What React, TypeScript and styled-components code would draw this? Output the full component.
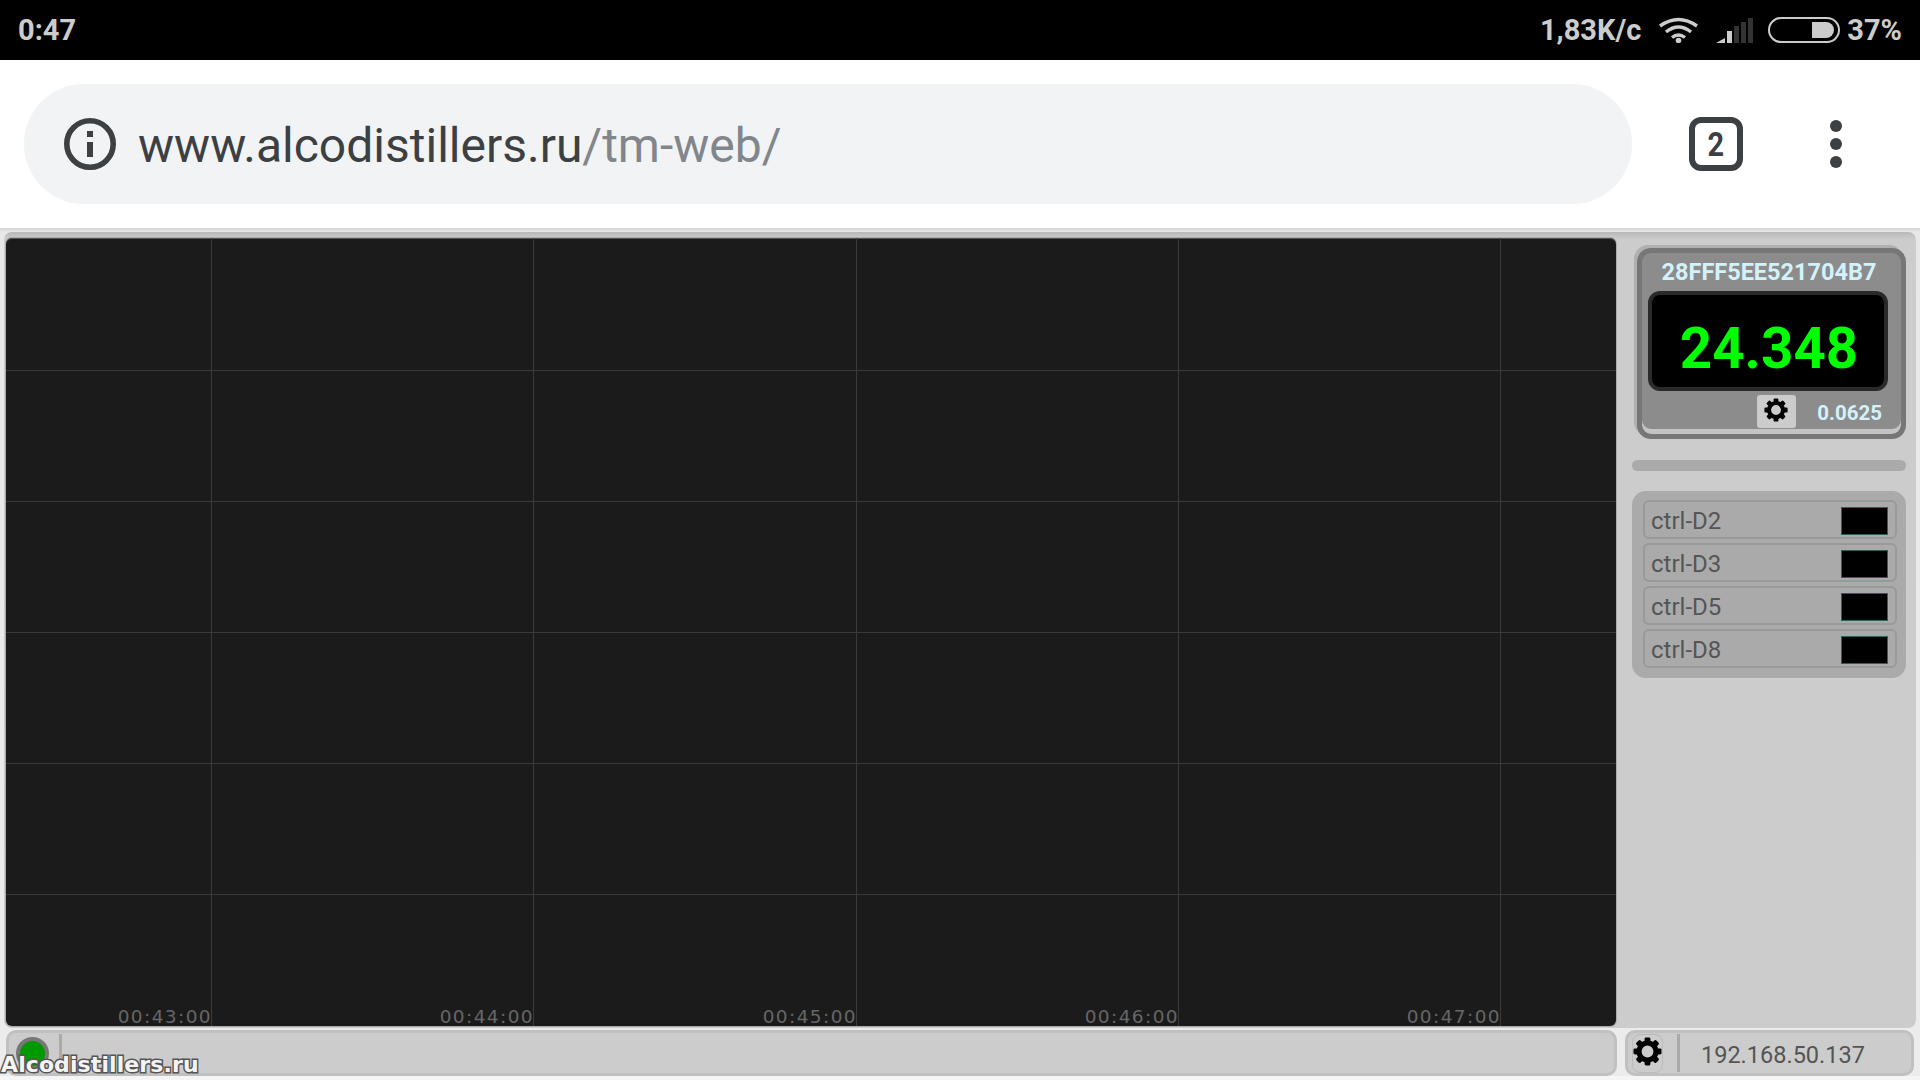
import React from "react";
import styled, { createGlobalStyle } from "styled-components";

const controls = ["ctrl-D2", "ctrl-D3", "ctrl-D5", "ctrl-D8"];
const gridX = [211, 533, 856, 1178, 1500];
const gridY = [132, 263, 394, 525, 656];
const times = ["00:43:00", "00:44:00", "00:45:00", "00:46:00", "00:47:00"];

export default function App() {
  return (
    <Page>
      <GlobalStyle />
      <StatusBar>
        <Clock>0:47</Clock>
        <StatusRight>
          <span>1,83K/c</span>
          <StatusSlot $left={18}>
            <WifiIcon />
          </StatusSlot>
          <StatusSlot $left={18}>
            <SignalIcon />
          </StatusSlot>
          <StatusSlot $left={14}>
            <BatteryIcon />
          </StatusSlot>
          <StatusSlot $left={7}>37%</StatusSlot>
        </StatusRight>
      </StatusBar>

      <Toolbar>
        <UrlPill>
          <InfoIcon />
          <UrlText>
            www.alcodistillers.ru<UrlPath>/tm-web/</UrlPath>
          </UrlText>
        </UrlPill>
        <TabCount>
          <span>2</span>
        </TabCount>
        <MenuDots>
          <i />
          <i />
          <i />
        </MenuDots>
      </Toolbar>

      <Workspace>
        <Upper>
          <ChartPane>
            <svg width="1610" height="788" viewBox="0 0 1610 788">
              {gridX.map((x) => (
                <line key={x} x1={x - 5.5} x2={x - 5.5} y1="0" y2="788" stroke="#3a3a3a" />
              ))}
              {gridY.map((y) => (
                <line key={y} x1="0" x2="1610" y1={y + 0.5} y2={y + 0.5} stroke="#3a3a3a" />
              ))}
              {times.map((t, i) => (
                <ChartLabel key={t} x={gridX[i] - 5} y="785" textAnchor="end">
                  {t}
                </ChartLabel>
              ))}
            </svg>
          </ChartPane>

          <Sidebar>
            <SensorCard>
              <SensorId>28FFF5EE521704B7</SensorId>
              <Display>24.348</Display>
              <SensorFoot>
                <CardGear>
                  <GearIcon size={24} />
                </CardGear>
                <Step>0.0625</Step>
              </SensorFoot>
            </SensorCard>
            <Divider />
            <ControlList>
              {controls.map((c) => (
                <ControlRow key={c}>
                  {c}
                  <Swatch />
                </ControlRow>
              ))}
            </ControlList>
          </Sidebar>
        </Upper>

        <Footer>
          <FooterLeft>
            <Led />
            <FootSep />
          </FooterLeft>
          <FooterRight>
            <FootGear>
              <GearIcon size={29} />
            </FootGear>
            <FootSep />
            <IpText>192.168.50.137</IpText>
          </FooterRight>
        </Footer>
        <Watermark>Alcodistillers.ru</Watermark>
      </Workspace>
    </Page>
  );
}

function GearIcon({ size }: { size: number }) {
  return (
    <svg width={size} height={size} viewBox="0 0 24 24">
      <circle cx="12" cy="12" r="7" fill="none" stroke="#000" strokeWidth="4.2" />
      {[0, 45, 90, 135, 180, 225, 270, 315].map((a) => (
        <rect key={a} x="9.6" y="0.4" width="4.8" height="5" rx="1.2" fill="#000" transform={`rotate(${a} 12 12)`} />
      ))}
    </svg>
  );
}

function WifiIcon() {
  return (
    <svg width="39" height="26" viewBox="0 0 39 26" fill="none" stroke="#ccc" strokeWidth="3.4">
      <path d="M1 9Q19.5 -4 38 9" />
      <path d="M7 15Q19.5 5 32 15" />
      <path d="M13 20.5Q19.5 15.5 26 20.5" />
      <circle cx="19.5" cy="23.5" r="2.8" fill="#ccc" stroke="none" />
    </svg>
  );
}

function SignalIcon() {
  return (
    <svg width="38" height="26" viewBox="0 0 38 26">
      <path d="M0 26 9 21V26Z" fill="#ccc" />
      <rect x="11" y="14" width="5" height="12" fill="#ccc" />
      <rect x="18" y="9" width="5" height="17" fill="#333" />
      <rect x="25" y="5" width="5" height="21" fill="#333" />
      <rect x="32" y="1" width="5" height="25" fill="#333" />
    </svg>
  );
}

function BatteryIcon() {
  return (
    <svg width="72" height="26" viewBox="0 0 72 26">
      <rect x="1" y="1" width="70" height="24" rx="12" fill="none" stroke="#ccc" strokeWidth="2" />
      <path d="M44 5H58A8 8 0 0 1 58 21H44Z" fill="#ccc" />
    </svg>
  );
}

function InfoIcon() {
  return (
    <svg width="52" height="52" viewBox="0 0 52 52">
      <circle cx="26" cy="26" r="23.2" fill="none" stroke="#3c4043" strokeWidth="5.6" />
      <rect x="23" y="13" width="6" height="6" fill="#3c4043" />
      <rect x="23" y="24" width="6" height="15" fill="#3c4043" />
    </svg>
  );
}

const GlobalStyle = createGlobalStyle`
  html, body {
    margin: 0;
    padding: 0;
    background: #f5f5f5;
  }
`;

const Page = styled.div`
  width: 1920px;
  height: 1080px;
  overflow: hidden;
  display: flex;
  flex-direction: column;
  font-family: Roboto, sans-serif;
`;

const StatusBar = styled.div`
  flex: none;
  height: 60px;
  background: #000;
  color: #ccc;
  display: flex;
  align-items: center;
  justify-content: space-between;
  padding: 0 18px;
  font-size: 29px;
  font-weight: 700;
`;

const Clock = styled.span``;

const StatusRight = styled.div`
  display: flex;
  align-items: center;
`;

const StatusSlot = styled.span<{ $left: number }>`
  margin-left: ${(p) => p.$left}px;
  display: flex;
  align-items: center;
`;

const Toolbar = styled.div`
  flex: none;
  height: 168px;
  background: #fff;
  display: flex;
  align-items: center;
  padding-left: 24px;
`;

const UrlPill = styled.div`
  width: 1608px;
  height: 120px;
  border-radius: 60px;
  background: #f1f3f4;
  display: flex;
  align-items: center;
  padding-left: 40px;
  box-sizing: border-box;
  gap: 22px;
`;

const UrlText = styled.span`
  font-size: 48px;
  color: #3c4043;
  padding-top: 2px;
`;

const UrlPath = styled.span`
  color: #80868b;
`;

const TabCount = styled.div`
  margin-left: 57px;
  width: 54px;
  height: 54px;
  box-sizing: border-box;
  border: 6px solid #3c4043;
  border-radius: 12px;
  display: flex;
  align-items: center;
  justify-content: center;
  color: #3c4043;
  font-size: 34px;
  font-weight: 700;
  span {
    transform: scaleX(0.85);
  }
`;

const MenuDots = styled.div`
  margin-left: 87px;
  display: flex;
  flex-direction: column;
  gap: 6px;
  i {
    width: 12px;
    height: 12px;
    border-radius: 50%;
    background: #3c4043;
  }
`;

const Workspace = styled.div`
  flex: none;
  position: relative;
  height: 848px;
  background: linear-gradient(#d4d4d4, #e8e8e8 4px, #ececec);
  display: flex;
  flex-direction: column;
`;

const Upper = styled.div`
  flex: none;
  height: 796px;
  margin: 4px 4px 0;
  display: flex;
  background: linear-gradient(#b8b8b8, #ccc 7px);
  border-radius: 8px;
`;

const ChartPane = styled.div`
  flex: none;
  margin: 6px 0 2px 2px;
  width: 1610px;
  height: 788px;
  background: #1b1b1b;
  border-radius: 6px;
  box-shadow: inset 0 1px 0 #555, 0 0 0 1px #aaa;
  svg {
    display: block;
    overflow: visible;
  }
`;

const ChartLabel = styled.text`
  font-family: "DejaVu Sans", sans-serif;
  font-size: 18.5px;
  letter-spacing: 1.4px;
  fill: #666;
`;

const Sidebar = styled.div`
  flex: 1;
  display: flex;
  flex-direction: column;
  padding: 16px 0 0 16px;
`;

const SensorCard = styled.div`
  margin-left: 5px;
  width: 269px;
  height: 191px;
  flex: none;
  box-sizing: border-box;
  border: 5px solid #777;
  border-radius: 14px;
  background: #8c8c8c;
  box-shadow: -3px -3px 0 #b0b0b0, inset 0 -5px 0 #c4c4c4;
  display: flex;
  flex-direction: column;
  padding: 4px 0 0 6px;
`;

const SensorId = styled.div`
  width: 240px;
  box-sizing: border-box;
  padding-left: 2px;
  text-align: center;
  color: #d4f2fb;
  font-size: 23.5px;
  font-weight: 700;
  line-height: 30px;
`;

const Display = styled.div`
  margin-top: 4px;
  width: 240px;
  height: 100px;
  flex: none;
  box-sizing: border-box;
  border: 4px solid #2a2a2a;
  border-radius: 12px;
  padding: 15px 0 0 2px;
  background: #000;
  color: #00ff00;
  font-size: 56.5px;
  font-weight: 700;
  display: flex;
  align-items: center;
  justify-content: center;
`;

const SensorFoot = styled.div`
  width: 240px;
  margin-top: 4px;
  box-sizing: border-box;
  padding-right: 6px;
  display: flex;
  align-items: center;
  justify-content: flex-end;
  gap: 21px;
`;

const CardGear = styled.div`
  width: 39px;
  height: 33px;
  border-radius: 3px;
  background: #ccc;
  display: flex;
  align-items: center;
  justify-content: center;
  svg {
    margin: 0 2px 4px 0;
  }
`;

const Step = styled.span`
  margin-top: 3px;
  color: #d4f2fb;
  font-size: 20.5px;
  font-weight: 700;
`;

const Divider = styled.div`
  margin: 21px 0 20px;
  width: 274px;
  height: 11px;
  flex: none;
  border-radius: 6px;
  background: #aaa;
`;

const ControlList = styled.div`
  width: 274px;
  height: 187px;
  flex: none;
  box-sizing: border-box;
  padding: 9px 9px 0 11px;
  border-radius: 14px;
  background: #aaa;
  display: flex;
  flex-direction: column;
  gap: 4px;
`;

const ControlRow = styled.div`
  height: 39px;
  flex: none;
  box-sizing: border-box;
  border: 2px solid #999;
  border-radius: 6px;
  display: flex;
  align-items: center;
  justify-content: space-between;
  padding: 2px 7px 0 6px;
  color: #555;
  font-size: 24px;
`;

const Swatch = styled.div`
  width: 47px;
  height: 28px;
  box-sizing: border-box;
  border: 1px solid #2f5f5f;
  background: #000;
`;

const Footer = styled.div`
  flex: none;
  display: flex;
  height: 46px;
  margin-top: 2px;
  padding: 0 6px;
  gap: 8px;
`;

const FooterBar = styled.div`
  height: 46px;
  box-sizing: border-box;
  border: 3px solid #c0c0c0;
  border-radius: 10px;
  background: #ccc;
  display: flex;
  align-items: center;
`;

const FooterLeft = styled(FooterBar)`
  width: 1611px;
  padding-left: 7px;
  gap: 10px;
`;

const FooterRight = styled(FooterBar)`
  flex: 1;
  padding-left: 4px;
`;

const Led = styled.div`
  width: 33px;
  height: 33px;
  box-sizing: border-box;
  border: 4px solid #777;
  border-radius: 50%;
  background: #090;
`;

const FootSep = styled.div`
  width: 3px;
  height: 38px;
  background: #aaa;
`;

const FootGear = styled.div`
  width: 31px;
  height: 39px;
  box-sizing: border-box;
  margin-right: 14px;
  border: 1px solid #bbb;
  border-radius: 8px;
  display: flex;
  align-items: center;
  justify-content: center;
  svg {
    flex: none;
    margin-bottom: 3px;
  }
`;

const IpText = styled.span`
  margin-left: 21px;
  padding-top: 3px;
  color: #555;
  font-size: 23.5px;
`;

const Watermark = styled.div`
  position: absolute;
  left: 1px;
  bottom: -1px;
  font-family: "DejaVu Sans", sans-serif;
  font-weight: 700;
  font-size: 22px;
  letter-spacing: 0.1px;
  color: #f4f4f4;
  -webkit-text-stroke: 3px #555;
  paint-order: stroke fill;
`;
